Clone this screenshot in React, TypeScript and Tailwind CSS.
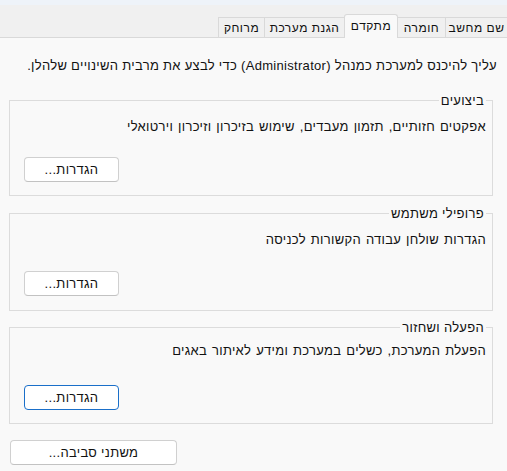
import React from 'react';

const tabs = [
  { label: 'שם מחשב', width: 'w-[62px]' },
  { label: 'חומרה', width: 'w-[48px]' },
  { label: 'מתקדם', width: 'w-[54px]', active: true },
  { label: 'הגנת מערכת', width: 'w-[80px]' },
  { label: 'מרוחק', width: 'w-[46px]' },
];

type GroupProps = {
  title: string;
  text: string;
  textGap: string;
  buttonGap: string;
  pb: string;
  mt: string;
  focused?: boolean;
};

const SettingsButton: React.FC<{ label: string; width: string; focused?: boolean }> = ({ label, width, focused }) => (
  <button
    type="button"
    className={`${width} h-[25px] rounded-[4px] bg-white leading-none text-[#111] border ${
      focused ? 'border-[#1a6fc9]' : 'border-[#d0d0d0] border-b-[#c2c2c2]'
    }`}
  >
    {label}
  </button>
);

const Group: React.FC<GroupProps> = ({ title, text, textGap, buttonGap, pb, mt, focused }) => (
  <fieldset className={`${mt} ml-[9px] mr-[14px] border border-[#dcdcdc] pr-[6px] pl-[14px] ${pb} flex flex-col`}>
    <legend className="px-[2px] leading-[15px]">{title}</legend>
    <p className={`${textGap} leading-[15px] [word-spacing:1px]`}>{text}</p>
    <div className={`${buttonGap} flex justify-end`}>
      <SettingsButton label="הגדרות..." width="w-[95px]" focused={focused} />
    </div>
  </fieldset>
);

const App: React.FC = () => {
  return (
    <div
      dir="rtl"
      className="w-[507px] h-[471px] overflow-hidden bg-[#f9f9f9] text-[13px] tracking-[0.3px] text-[#111] font-['Liberation_Sans',sans-serif]"
    >
      {/* פס עליון */}
      <div className="h-[5px] bg-[#eef3f9]" />

      {/* לשוניות */}
      <div className="h-[33px] bg-[#f0f0f0] border-b border-[#d9d9d9] flex items-end text-[12px] tracking-[0.5px]">
        {tabs.map((tab) =>
          tab.active ? (
            <div
              key={tab.label}
              className={`${tab.width} h-[24px] -mb-px -mr-px relative z-10 bg-[#f9f9f9] border-t border-l border-r border-[#d9d9d9] rounded-t-[3px] flex items-center justify-center pb-[2px]`}
            >
              {tab.label}
            </div>
          ) : (
            <div
              key={tab.label}
              className={`${tab.width} h-[20px] border-t border-l border-[#d9d9d9] flex items-center justify-center whitespace-nowrap`}
            >
              {tab.label}
            </div>
          )
        )}
      </div>

      <div className="flex flex-col">
        <p className="mt-[20px] pr-[10px] leading-[15px] whitespace-nowrap">
          עליך להיכנס למערכת כמנהל (Administrator) כדי לבצע את מרבית השינויים שלהלן.
        </p>

        <Group
          mt="mt-[20px]"
          title="ביצועים"
          text="אפקטים חזותיים, תזמון מעבדים, שימוש בזיכרון וזיכרון וירטואלי"
          textGap="mt-[11px]"
          buttonGap="mt-[23px]"
          pb="pb-[13px]"
        />

        <Group
          mt="mt-[10px]"
          title="פרופילי משתמש"
          text="הגדרות שולחן עבודה הקשורות לכניסה"
          textGap="mt-[11px]"
          buttonGap="mt-[24px]"
          pb="pb-[14px]"
        />

        <Group
          mt="mt-[9px]"
          title="הפעלה ושחזור"
          text="הפעלת המערכת, כשלים במערכת ומידע לאיתור באגים"
          textGap="mt-[8px]"
          buttonGap="mt-[27px]"
          pb="pb-[13px]"
          focused
        />

        <div className="mt-[16px] flex justify-end pl-[10px]">
          <SettingsButton label="משתני סביבה..." width="w-[167px]" />
        </div>
      </div>
    </div>
  );
};

export default App;
